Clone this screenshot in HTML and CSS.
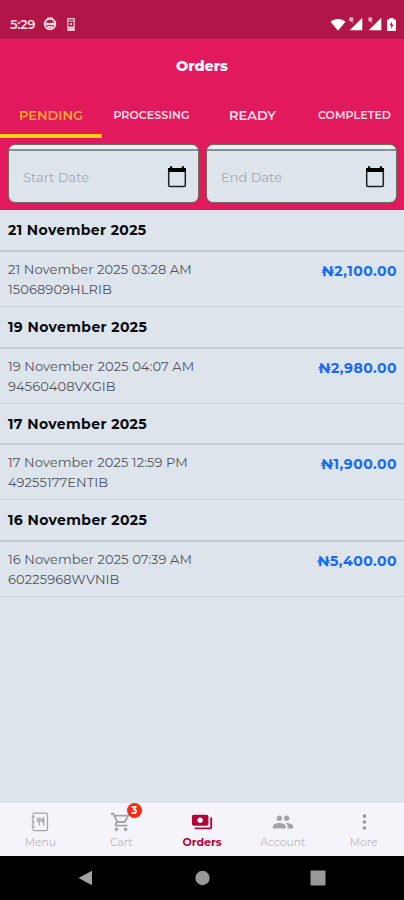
FILE: index.html
```html
<!DOCTYPE html>
<html lang="en">
<head>
    <meta charset="UTF-8">
    <meta name="viewport" content="width=device-width, initial-scale=1.0">
    <title>Orders</title>
    <link rel="stylesheet" href="styles.css">
</head>
<body>

    <div class="app">
        <div class="status-bar">
            <span class="time">5:29</span>
            <svg class="globe" width="14" height="14" viewBox="0 0 14 14" fill="none" stroke="#fbdce6">
                <circle cx="7" cy="7" r="5.3" stroke-width="1.8"/>
                <path d="M4 1.500h6M2 7h10M4.500 9.800h5" stroke-width="1.8"/>
                <path d="M4.700 5.500v3M9.300 5.500v3" stroke-width="1.2"/>
            </svg>
            <svg class="device" width="8" height="13" viewBox="0 0 8 13">
                <path d="M.8.7h6.4v11.6H.8zM1 3h6M1 9h6" fill="none" stroke="#f2c6d5" stroke-width="1.2"/>
                <path d="M1 9h6v3H1zM3 5h2v2H3z" fill="#f2c6d5"/>
            </svg>
            <div class="signals">
                <svg width="16" height="13" viewBox="0 0 16 13"><path d="M.5 3.7C4.800.1 11.200.1 15.500 3.700L8 12.800z" fill="#fff"/></svg>
                <svg width="14" height="14" viewBox="0 0 14 14"><path d="M13.300.7v12.600H.7z" fill="#fff"/><path d="M.8.8h3v3.200h-3zM2 4l2.500 2" fill="#e8b5c6" stroke="#e8b5c6" stroke-width=".8"/></svg>
                <svg width="14" height="14" viewBox="0 0 14 14"><path d="M13.300.7v12.600H.7z" fill="#fff"/><path d="M.8.8h3v3.200h-3zM2 4l2.500 2" fill="#e8b5c6" stroke="#e8b5c6" stroke-width=".8"/></svg>
                <svg class="battery" width="9" height="13" viewBox="0 0 9 13"><path d="M2.500 0h4v1.500H8a1 1 0 0 1 1 1V12a1 1 0 0 1-1 1H1a1 1 0 0 1-1-1V2.500a1 1 0 0 1 1-1h1.500z" fill="#fff"/><path d="M5 3.500L2.500 7.500H4.200V11L6.500 6.500H5z" fill="#b21548"/></svg>
            </div>
        </div>

        <header class="top">
            <h1>Orders</h1>
            <nav class="tabs">
                <a class="tab active"><span>PENDING</span></a>
                <a class="tab small"><span>PROCESSING</span></a>
                <a class="tab"><span>READY</span></a>
                <a class="tab small completed"><span>COMPLETED</span></a>
            </nav>
            <div class="filters">
                <div class="date-field">
                    <span>Start Date</span>
                    <svg width="20" height="22" viewBox="0 0 20 22"><path d="M1.700 4h16.600v15.500a1 1 0 0 1-1 1H2.700a1 1 0 0 1-1-1z" fill="none" stroke="#1c2026" stroke-width="1.500"/><path d="M1 2h2V.3h2.200V2h9.600V.3H17V2h2v4H1z" fill="#050505"/></svg>
                </div>
                <div class="date-field">
                    <span>End Date</span>
                    <svg width="20" height="22" viewBox="0 0 20 22"><path d="M1.700 4h16.600v15.500a1 1 0 0 1-1 1H2.700a1 1 0 0 1-1-1z" fill="none" stroke="#1c2026" stroke-width="1.500"/><path d="M1 2h2V.3h2.200V2h9.600V.3H17V2h2v4H1z" fill="#050505"/></svg>
                </div>
            </div>
        </header>

        <main class="orders">
            <section>
                <h2>21 November 2025</h2>
                <div class="order">
                    <p>21 November 2025 03:28 AM<br>15068909HLRIB</p>
                    <span class="price">₦2,100.00</span>
                </div>
            </section>
            <section>
                <h2>19 November 2025</h2>
                <div class="order">
                    <p>19 November 2025 04:07 AM<br>94560408VXGIB</p>
                    <span class="price">₦2,980.00</span>
                </div>
            </section>
            <section>
                <h2>17 November 2025</h2>
                <div class="order">
                    <p>17 November 2025 12:59 PM<br>49255177ENTIB</p>
                    <span class="price">₦1,900.00</span>
                </div>
            </section>
            <section>
                <h2>16 November 2025</h2>
                <div class="order">
                    <p>16 November 2025 07:39 AM<br>60225968WVNIB</p>
                    <span class="price">₦5,400.00</span>
                </div>
            </section>
        </main>

        <nav class="bottom-nav">
            <a class="nav-item">
                <svg width="20" height="20" viewBox="0 0 20 20" fill="none" stroke="#a3a3a8" stroke-width="1.200"><rect x="3" y="1.200" width="14.500" height="17.500" rx="1.500"/><path d="M1.500 5h3.500M1.500 10h3.500M1.500 15h3.500"/><path d="M7.500 5.500v3.500h3.500V5.500M9.250 5.500v8M13.700 13.500v-8c-1.200.8-1.400 2.500-1.200 4.500h1.200"/></svg>
                <span>Menu</span>
            </a>
            <a class="nav-item">
                <svg width="22" height="22" viewBox="0 0 24 24" fill="#a3a3a8"><path d="M15.550 13c.75 0 1.410-.41 1.750-1.030l3.580-6.490A.996.996 0 0 0 20.010 4H5.210l-.94-2H1v2h2l3.600 7.590-1.350 2.440C4.520 15.370 5.480 17 7 17h12v-2H7l1.100-2h7.450zM6.160 6h12.150l-2.760 5H8.530L6.160 6zM7 18c-1.100 0-1.990.9-1.990 2S5.900 22 7 22s2-.9 2-2-.9-2-2-2zm10 0c-1.100 0-1.990.9-1.990 2s.89 2 1.990 2 2-.9 2-2-.9-2-2-2z"/></svg>
                <span>Cart</span>
                <b class="badge">3</b>
            </a>
            <a class="nav-item current">
                <svg width="22" height="22" viewBox="0 0 24 24" fill="#b0063a"><path fill-rule="evenodd" d="M19 14V6c0-1.100-.9-2-2-2H3c-1.100 0-2 .9-2 2v8c0 1.100.9 2 2 2h14c1.100 0 2-.9 2-2zm-9-1c-1.660 0-3-1.340-3-3s1.340-3 3-3 3 1.340 3 3-1.340 3-3 3zM23 7v11c0 1.100-.9 2-2 2H4v-2h17V7h2z"/></svg>
                <span>Orders</span>
            </a>
            <a class="nav-item">
                <svg width="22" height="22" viewBox="0 0 24 24" fill="#a3a3a8"><path d="M16 11c1.660 0 2.990-1.340 2.990-3S17.660 5 16 5s-3 1.340-3 3 1.340 3 3 3zm-8 0c1.660 0 2.990-1.340 2.990-3S9.660 5 8 5 5 6.340 5 8s1.340 3 3 3zm0 2c-2.330 0-7 1.170-7 3.500V19h14v-2.500c0-2.330-4.670-3.500-7-3.500zm8 0c-.29 0-.62.020-.97.050 1.160.84 1.970 1.970 1.970 3.450V19h6v-2.500c0-2.330-4.670-3.500-7-3.500z"/></svg>
                <span>Account</span>
            </a>
            <a class="nav-item">
                <svg width="22" height="22" viewBox="0 0 24 24" fill="#99999e"><circle cx="12.500" cy="5.500" r="2"/><circle cx="12.500" cy="12" r="2"/><circle cx="12.500" cy="18.500" r="2"/></svg>
                <span>More</span>
            </a>
        </nav>

        <div class="system-nav">
            <svg width="16" height="16" viewBox="0 0 16 16"><path d="M.5 8L14 .8v14.400z" fill="#a3a3a3"/></svg>
            <svg width="16" height="16" viewBox="0 0 16 16"><circle cx="8.500" cy="8" r="7.200" fill="#999"/></svg>
            <svg width="16" height="16" viewBox="0 0 16 16"><rect x=".5" y=".5" width="15" height="15" rx="1" fill="#999"/></svg>
        </div>
    </div>

</body>
</html>
```

FILE: styles.css
```css
* {
    box-sizing: border-box;
}
body {
    margin: 0;
    font-family: "Montserrat", Inter, sans-serif;
    background-color: #dee4ec;
}
h1, h2, p {
    margin: 0;
}
svg {
    display: block;
    flex: none;
}
.app {
    display: flex;
    flex-direction: column;
    width: 404px;
    height: 900px;
    overflow: hidden;
}
.status-bar {
    display: flex;
    align-items: center;
    height: 39px;
    padding: 9px 8px 0 10px;
    background-color: #b21548;
    color: #fbdce6;
}
.time {
    width: 33px;
    font-size: 13px;
    font-weight: 600;
    letter-spacing: -0.4px;
}
.device {
    margin-left: 10px;
}
.signals {
    display: flex;
    align-items: center;
    gap: 5px;
    margin-left: auto;
}
.signals svg:first-child {
    margin-right: -2px;
}
.top {
    height: 171px;
    background-color: #e2195c;
}
.top h1 {
    height: 54px;
    line-height: 54px;
    color: #fff;
    text-align: center;
    font-size: 14.4px;
    font-weight: 800;
}
.tabs {
    display: grid;
    grid-template-columns: repeat(4, 1fr);
    height: 45px;
}
.tab {
    display: flex;
    justify-content: center;
    padding-top: 14px;
    color: #fde3eb;
    font-size: 13px;
    line-height: 17px;
    font-weight: 600;
    letter-spacing: 0;
    border-bottom: 4px solid transparent;
}
.tab.active {
    color: #fba832;
    border-color: #fdd20d;
    margin-right: -1px;
}
.tab.small {
    font-size: 11px;
    letter-spacing: 0.1px;
}
.tab.completed {
    padding-left: 2px;
}
.filters {
    display: grid;
    grid-template-columns: 1fr 1fr;
    gap: 7px;
    padding: 6px 7px 0 8px;
}
.date-field {
    display: flex;
    align-items: center;
    justify-content: space-between;
    height: 59px;
    padding: 6px 11px 0 14px;
    border: 1px solid #6b6f5c;
    border-radius: 7px;
    background: linear-gradient(#edf1f2 4px, #849399 4px, #849399 6px, #dee4ec 6px);
    color: #a2a8b1;
    font-size: 13px;
}
.orders {
    flex: 1;
}
.orders h2 {
    height: 41.8px;
    padding-left: 8px;
    line-height: 40px;
    color: #080a0d;
    border-bottom: 2px solid #c2c9d3;
    font-size: 14px;
    font-weight: 700;
    letter-spacing: 0.38px;
}
.order {
    display: flex;
    justify-content: space-between;
    height: 55px;
    padding: 7px 7px 0 8px;
    border-bottom: 1px solid #cdd3dc;
}
.order p {
    color: #50545c;
    font-size: 13px;
    line-height: 20px;
    letter-spacing: 0.1px;
}
.price {
    color: #146bf5;
    font-size: 14px;
    line-height: 24px;
    font-weight: 700;
    letter-spacing: 0.5px;
}
.bottom-nav {
    display: grid;
    grid-template-columns: repeat(5, 1fr);
    height: 53px;
    background-color: #f5f4fb;
}
.nav-item {
    position: relative;
    display: flex;
    flex-direction: column;
    align-items: center;
    padding-top: 8px;
    color: #b6b6bc;
    font-size: 10.7px;
    line-height: 15px;
}
.nav-item svg {
    height: 22px;
    margin-bottom: 2px;
}
.current {
    color: #b0063a;
    font-size: 11px;
    font-weight: 700;
}
.badge {
    position: absolute;
    top: 0;
    left: 46px;
    width: 15px;
    height: 15px;
    border-radius: 50%;
    background-color: #f62b16;
    color: #fff;
    text-align: center;
    font-size: 10px;
    line-height: 15px;
}
.system-nav {
    display: flex;
    justify-content: center;
    align-items: center;
    gap: 100px;
    height: 44px;
    background-color: #000;
}
```
